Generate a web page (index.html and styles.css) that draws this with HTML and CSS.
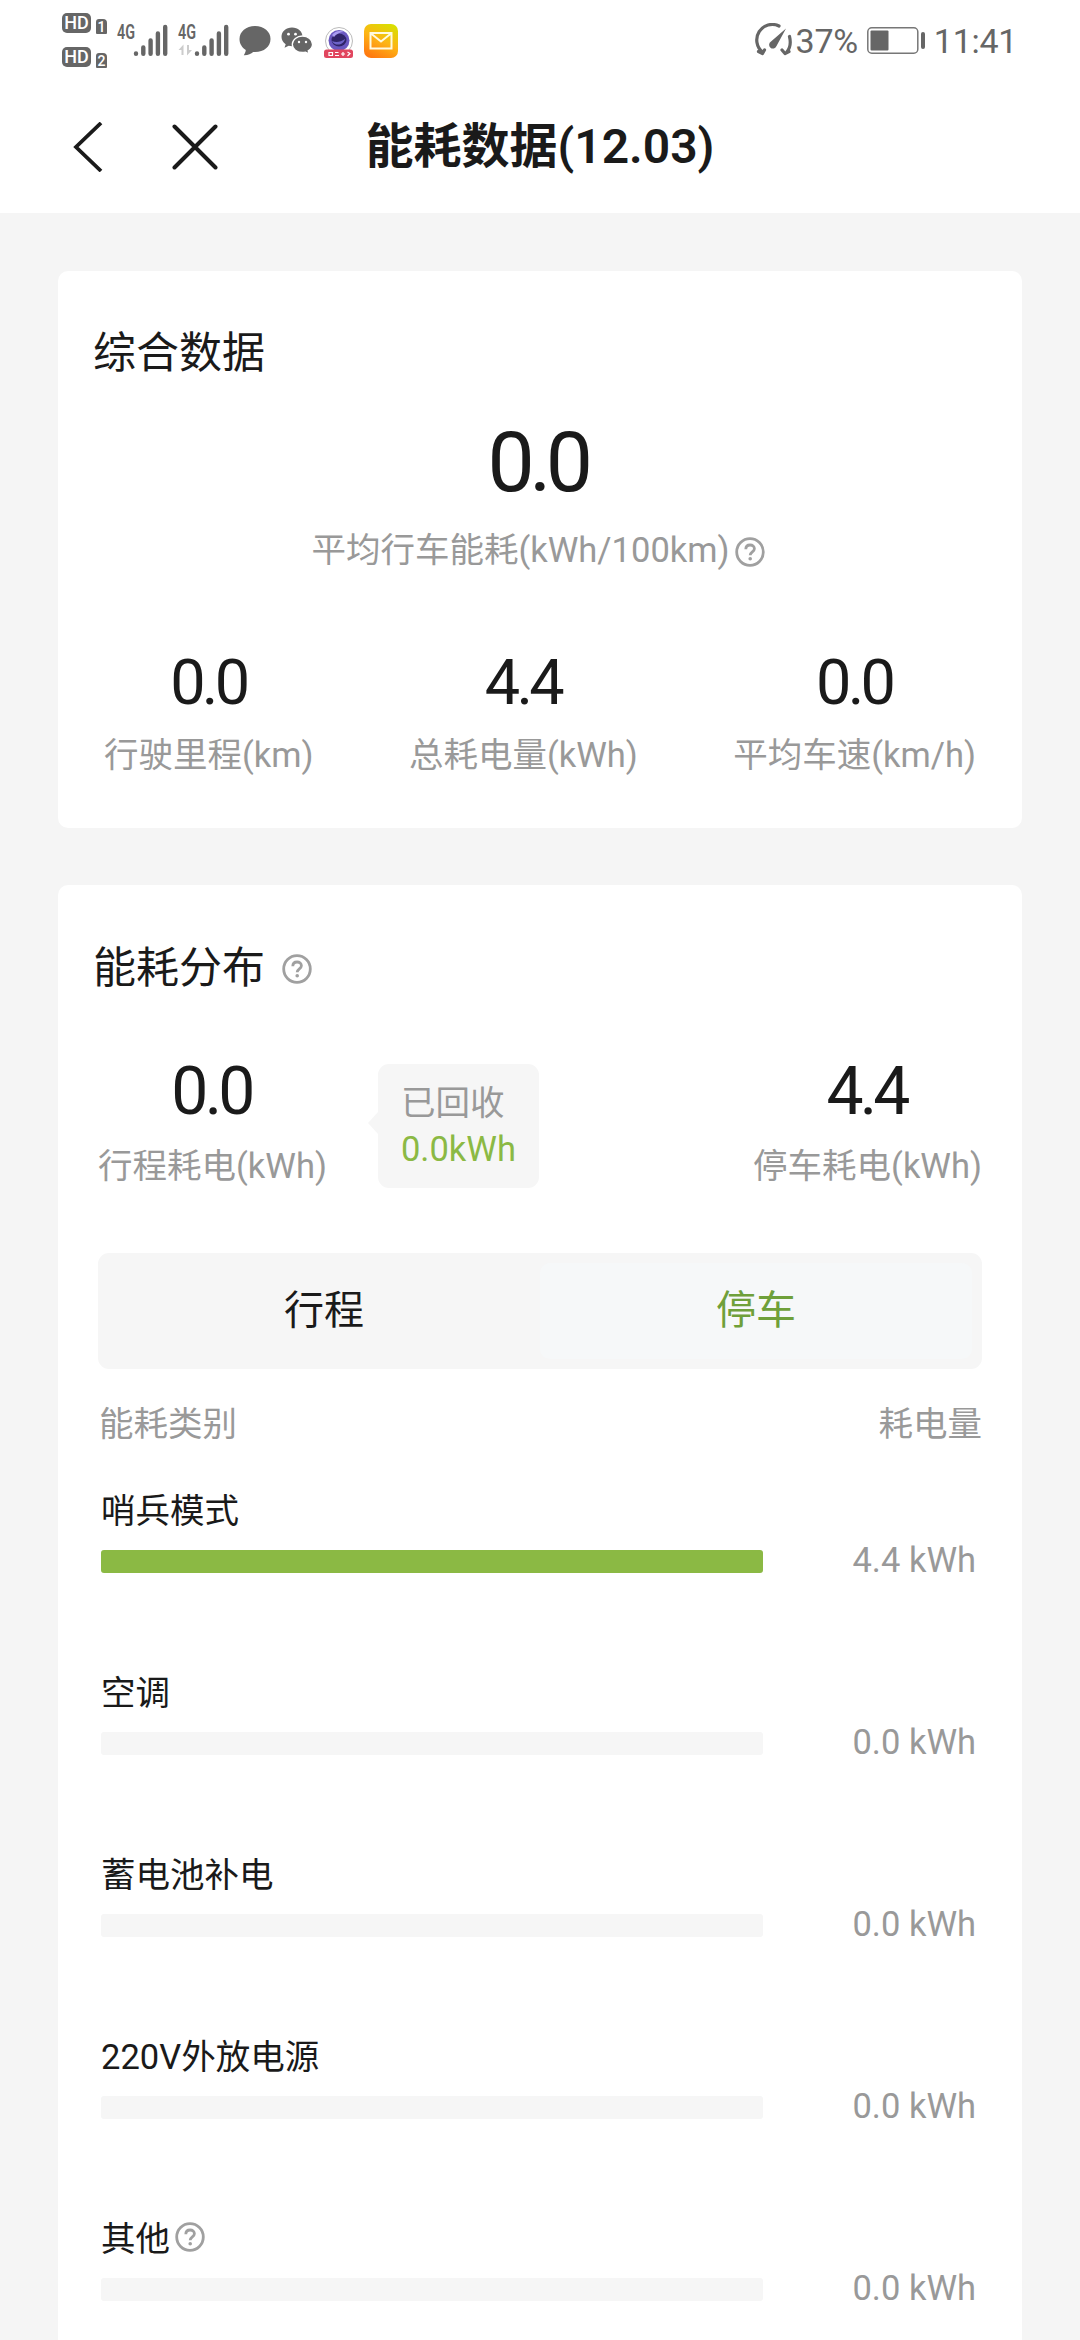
FILE: index.html
```html
<!DOCTYPE html>
<html lang="zh-CN">
<head>
    <meta charset="UTF-8">
    <title>能耗数据</title>
    <link rel="stylesheet" href="styles.css">
</head>
<body>
    <!-- 公用问号图标 -->
    <svg class="defs" width="0" height="0">
        <symbol id="help" viewBox="0 0 30 30">
            <circle cx="15" cy="15" r="13.3" fill="none" stroke="#a0a0a0" stroke-width="2.8"/>
            <path d="M10.8 12.2c0-2.6 1.8-4.2 4.3-4.2s4.3 1.6 4.3 3.8c0 3-4.2 3.2-4.2 6.4" fill="none" stroke="#a0a0a0" stroke-width="2.8"/>
            <circle cx="15.2" cy="21.8" r="1.8" fill="#a0a0a0"/>
        </symbol>
    </svg>

    <header class="header">
        <div class="status">
            <div class="status-left">
                <div class="hd-list">
                    <div class="hd"><span class="hd-tag">HD</span><span class="hd-no">1</span></div>
                    <div class="hd"><span class="hd-tag">HD</span><span class="hd-no">2</span></div>
                </div>
                <svg class="signal" width="52" height="42" viewBox="0 -6 52 42">
                    <text class="net" x="0" y="17" textLength="18" lengthAdjust="spacingAndGlyphs">4G</text>
                    <path d="M19 31.5v.2M26.3 25.5v6.3M33.6 18.5v13.3M40.9 11.5v20.3M48.2 5v26.8" stroke="#666" stroke-width="4.4" stroke-linecap="round"/>
                </svg>
                <svg class="signal" width="52" height="42" viewBox="0 -6 52 42">
                    <text class="net" x="0" y="17" textLength="18" lengthAdjust="spacingAndGlyphs">4G</text>
                    <path d="M5.5 33v-10.5l-5 5.5h3v5zM9 23v10.5l5-5.5h-3v-5z" fill="#ccc"/>
                    <path d="M19 31.5v.2M26.3 25.5v6.3M33.6 18.5v13.3M40.9 11.5v20.3M48.2 5v26.8" stroke="#666" stroke-width="4.4" stroke-linecap="round"/>
                </svg>
                <svg class="bubble" width="32" height="30" viewBox="0 0 32 30">
                    <path d="M16 0C7 0 .5 5.6.5 13c0 4.8 2.5 8.5 6.3 11-.2 2-1 3.8-2 5.3 4 .2 7.2-1.3 9.4-3.3l1.8.1c9 0 15.500-5.7 15.500-13.1S25 0 16 0z" fill="#666"/>
                </svg>
                <svg class="wechat" width="32" height="27" viewBox="0 0 32 27">
                    <path d="M11 .5C5 .5.5 4.5.5 9.800c0 3.200 1.600 5.800 4.200 7.500l-1.200 3.400 4.200-2c1 .3 2.200.5 3.400.5C17 19.200 21.600 15 21.600 9.800S17 .5 11 .5z" fill="#666"/>
                    <path d="M21.500 9C16 9 11.300 12.600 11.300 17.300S16 25.500 21.500 25.500c1 0 2-.1 3-.4l3.600 1.700-.9-3c2.500-1.500 4.300-3.800 4.300-6.500C31.500 12.600 27 9 21.500 9z" fill="#666" stroke="#fff" stroke-width="1.3"/>
                    <g fill="#fff"><circle cx="7.5" cy="7.2" r="1.4"/><circle cx="14.5" cy="7.2" r="1.4"/><circle cx="18" cy="15" r="1.2"/><circle cx="25" cy="15" r="1.2"/></g>
                </svg>
                <svg class="app" width="32" height="32" viewBox="0 0 32 32">
                    <circle cx="16" cy="14" r="13.5" fill="#fff" stroke="#bbb"/>
                    <circle cx="16" cy="13.5" r="10.5" fill="#6a58c0"/>
                    <ellipse cx="16" cy="13" rx="7.5" ry="6.5" fill="#2f2468"/>
                    <path d="M9 8c3-4 8-5 12-3-4 0-8 2-10 5z" fill="#a99cf0"/>
                    <path d="M9 14c4 2 9 1 13-2-1 6-10 8-13 2z" fill="#6d63c8"/>
                    <rect x="1" y="22.5" width="29" height="8.5" rx="2.5" fill="#e1465f"/>
                    <path d="M6 25.5h3.5v3H6zM12 25.5h3.5M12 28.5h4M18 27h4M20 25v4M24.5 25l2.5 1.5-2.5 2.5" fill="none" stroke="#fff" stroke-width="1.2"/>
                </svg>
                <svg class="mail" width="34" height="34" viewBox="0 0 34 34">
                    <defs>
                        <linearGradient id="mailBg" x1=".8" y1="0" x2=".3" y2="1">
                            <stop offset="0" stop-color="#d8e000"/>
                            <stop offset=".5" stop-color="#fdb515"/>
                            <stop offset="1" stop-color="#ff7a10"/>
                        </linearGradient>
                    </defs>
                    <rect width="34" height="34" rx="7" fill="url(#mailBg)"/>
                    <path d="M6.5 9h21v15.5h-21zM7 9.5l10 8 10-8" fill="none" stroke="#fffbe0" stroke-width="2"/>
                </svg>
            </div>
            <div class="status-right">
                <svg class="gauge" width="38" height="33" viewBox="0 0 38 33">
                    <path d="M24 3A15.5 15.5 0 0 0 7.5 29M3.5 28.5l4 2 2-3.5M34.5 13.5c1.5 6 .5 12-3 16M27 27l3 3.5 4-2" fill="none" stroke="#666" stroke-width="3.2" stroke-linecap="round" stroke-linejoin="round"/>
                    <path d="M31 5.5L16 18.5a3.8 3.8 0 1 0 5.5 4.5z" fill="#666"/>
                </svg>
                <span class="percent">37%</span>
                <svg class="battery" width="52" height="27" viewBox="0 0 52 27">
                    <rect x=".8" y=".8" width="50" height="25.4" rx="4" fill="none" stroke="#777" stroke-width="1.5"/>
                    <rect x="3.5" y="3.5" width="18" height="20" rx="1" fill="#666"/>
                </svg>
                <i class="battery-cap"></i>
                <span>11:41</span>
            </div>
        </div>
        <nav class="nav">
            <svg class="back" width="30" height="50" viewBox="0 0 30 50">
                <path d="M28 1L3 25l25 24" fill="none" stroke="#1a1a1a" stroke-width="3.8"/>
            </svg>
            <svg class="close" width="46" height="46" viewBox="0 0 46 46">
                <path d="M2.5 2.5l41 41M43.5 2.5l-41 41" stroke="#1a1a1a" stroke-width="4" stroke-linecap="round"/>
            </svg>
            <h1>能耗数据(12.03)</h1>
        </nav>
    </header>

    <section class="card">
        <h2>综合数据</h2>
        <div class="average">
            <div class="num num-big">0.0</div>
            <div class="label">平均行车能耗(kWh/100km)<svg class="help"><use href="#help"/></svg></div>
        </div>
        <div class="stats">
            <div class="stat">
                <div class="num">0.0</div>
                <div class="label">行驶里程(km)</div>
            </div>
            <div class="stat">
                <div class="num">4.4</div>
                <div class="label">总耗电量(kWh)</div>
            </div>
            <div class="stat">
                <div class="num">0.0</div>
                <div class="label">平均车速(km/h)</div>
            </div>
        </div>
    </section>

    <section class="card card-detail">
        <h2>能耗分布<svg class="help"><use href="#help"/></svg></h2>
        <div class="summary">
            <div class="stat">
                <div class="num num-mid">0.0</div>
                <div class="label">行程耗电(kWh)</div>
            </div>
            <div class="recycle">
                <div>已回收</div>
                <div class="green">0.0kWh</div>
            </div>
            <div class="stat stat-end">
                <div class="num num-mid">4.4</div>
                <div class="label">停车耗电(kWh)</div>
            </div>
        </div>
        <div class="tabs">
            <div class="tab">行程</div>
            <div class="tab active">停车</div>
        </div>
        <div class="list-head">
            <span>能耗类别</span>
            <span>耗电量</span>
        </div>
        <div class="list">
            <div class="item">
                <div class="name">哨兵模式</div>
                <div class="usage">
                    <div class="bar"><div class="fill" style="width: 100%"></div></div>
                    <span class="value">4.4 kWh</span>
                </div>
            </div>
            <div class="item">
                <div class="name">空调</div>
                <div class="usage">
                    <div class="bar"><div class="fill" style="width: 0%"></div></div>
                    <span class="value">0.0 kWh</span>
                </div>
            </div>
            <div class="item">
                <div class="name">蓄电池补电</div>
                <div class="usage">
                    <div class="bar"><div class="fill" style="width: 0%"></div></div>
                    <span class="value">0.0 kWh</span>
                </div>
            </div>
            <div class="item">
                <div class="name">220V外放电源</div>
                <div class="usage">
                    <div class="bar"><div class="fill" style="width: 0%"></div></div>
                    <span class="value">0.0 kWh</span>
                </div>
            </div>
            <div class="item">
                <div class="name">其他<svg class="help"><use href="#help"/></svg></div>
                <div class="usage">
                    <div class="bar"><div class="fill" style="width: 0%"></div></div>
                    <span class="value">0.0 kWh</span>
                </div>
            </div>
        </div>
    </section>
</body>
</html>
```
FILE: styles.css
```css
:root {
    --bg-color: #f5f5f5;
    --text-color: #1a1a1a;
    --gray: #999;
    --green: #8bb944;
    --block-bg: #f6f6f6;
}

* {
    box-sizing: border-box;
}

body {
    margin: 0;
    height: 2340px;
    overflow: hidden;
    display: flex;
    flex-direction: column;
    background-color: var(--bg-color);
    color: var(--text-color);
    font-family: Roboto, "Noto Sans CJK SC", sans-serif;
    font-size: 34.5px;
}

svg {
    display: block;
    flex: none;
}

.defs {
    display: none;
}

h1, h2 {
    margin: 0;
}

.header {
    height: 213px;
    flex: none;
    background-color: #fff;
}

/* 状态栏 */
.status {
    height: 80px;
    padding: 0 63px 0 62px;
    display: flex;
    justify-content: space-between;
    color: #666;
}

.status-left, .status-right {
    display: flex;
    align-items: flex-start;
}

.hd-list {
    padding-top: 13px;
    display: flex;
    flex-direction: column;
    gap: 13px;
    width: 55px;
}

.hd {
    display: flex;
    align-items: flex-end;
    gap: 5px;
    height: 21px;
}

.hd-tag, .hd-no {
    background-color: #666;
    color: #fff;
    font-weight: 500;
    text-align: center;
}

.hd-tag {
    width: 29px;
    height: 20px;
    line-height: 20px;
    border-radius: 5px;
    font-size: 18px;
    align-self: flex-start;
}

.hd-no {
    width: 11px;
    height: 15px;
    line-height: 16px;
    border-radius: 3px 4px 1px 1px;
    font-size: 14px;
}

.signal {
    margin: 16px 9px 0 0;
    overflow: visible;
}

.net {
    font-size: 20px;
    font-weight: 600;
    fill: #666;
}

.bubble {
    margin-top: 26px;
}

.wechat {
    margin: 27px 0 0 10px;
}

.app {
    margin: 27px 0 0 10px;
}

.mail {
    margin: 24px 0 0 9px;
}

.status-right {
    line-height: 82px;
    font-size: 34px;
}

.gauge {
    margin: 23px 3px 0 0;
}

.battery {
    margin: 27px 0 0 9px;
}

.battery-cap {
    width: 4px;
    height: 17px;
    margin: 32px 9px 0 2px;
    border-radius: 2px;
    background-color: #666;
}

.status-right span {
    letter-spacing: -0.3px;
}

/* 标题栏 */
.nav {
    position: relative;
    height: 133px;
    padding: 0 73px;
    display: flex;
    align-items: center;
}

.close {
    margin-left: 69px;
}

.nav h1 {
    position: absolute;
    left: 0;
    right: 0;
    text-align: center;
    font-size: 48px;
    font-weight: 600;
    line-height: 66px;
    pointer-events: none;
}

/* 卡片 */
.card {
    flex: none;
    margin: 58px 58px 0;
    height: 557px;
    padding: 52px 0 0;
    border-radius: 10px;
    background-color: #fff;
}

.card h2 {
    display: flex;
    align-items: center;
    padding-left: 35px;
    font-size: 43px;
    font-weight: 400;
    line-height: 60px;
}

.help {
    width: 30px;
    height: 30px;
}

h2 .help {
    margin: 2px 0 0 17px;
}

.num {
    padding-right: 1px;
    text-align: center;
    font-size: 63px;
    line-height: 64px;
    letter-spacing: -3.8px;
}

.num-big {
    padding-right: 5px;
    font-size: 84px;
    line-height: 84px;
    letter-spacing: -5.5px;
}

.num-mid {
    padding-right: 2px;
    font-size: 66px;
    line-height: 66px;
}

.label {
    display: flex;
    align-items: center;
    justify-content: center;
    color: var(--gray);
    line-height: 48px;
}

.average {
    margin-top: 38px;
}

.average .label {
    margin-top: 21px;
    padding-right: 4px;
}

.average .help {
    margin: 4px 0 0 5px;
}

.stats {
    margin-top: 77px;
    padding: 0 46px;
    display: flex;
    justify-content: space-between;
}

.stat .label {
    margin-top: 16px;
}

.card-detail {
    flex: 1;
    margin-top: 57px;
    height: auto;
    padding-top: 53px;
    border-radius: 10px 10px 0 0;
}

.summary {
    margin-top: 61px;
    padding: 0 40px;
    display: flex;
    align-items: flex-start;
}

.summary .label {
    margin-top: 17px;
}

.recycle {
    position: relative;
    width: 161px;
    height: 124px;
    margin: 5px 0 0 51px;
    padding: 16px 0 0 23px;
    border-radius: 11px;
    background-color: var(--block-bg);
    color: var(--gray);
    line-height: 46px;
}

/* 气泡左侧箭头 */
.recycle::before {
    content: "";
    position: absolute;
    left: -10px;
    top: 48px;
    border: 11px solid transparent;
    border-left: 0;
    border-right: 10px solid var(--block-bg);
}

.recycle .green {
    color: var(--green);
}

.stat-end {
    margin-left: auto;
}

.tabs {
    margin: 63px 40px 0;
    height: 116px;
    padding: 10px;
    display: flex;
    border-radius: 11px;
    background-color: var(--block-bg);
}

.tab {
    flex: 1;
    text-align: center;
    font-size: 40px;
    line-height: 95px;
    border-radius: 10px;
}

.tab.active {
    background-color: #f6f8f9;
    color: #6fa03a;
}

.list-head {
    margin-top: 31px;
    padding: 0 40px 0 41px;
    display: flex;
    justify-content: space-between;
    color: var(--gray);
    line-height: 48px;
}

.list {
    margin-top: 39px;
    padding: 0 46px 0 43px;
    display: flex;
    flex-direction: column;
    gap: 96px;
}

.name {
    display: flex;
    align-items: center;
    line-height: 48px;
}

.name .help {
    margin: 0 0 4px 5px;
}

.usage {
    margin-top: 15px;
    height: 23px;
    display: flex;
    justify-content: space-between;
}

.bar {
    width: 662px;
    height: 23px;
    border-radius: 3px;
    background-color: var(--block-bg);
}

.fill {
    height: 100%;
    border-radius: 3px;
    background-color: var(--green);
}

.value {
    color: var(--gray);
    line-height: 20px;
}
```
